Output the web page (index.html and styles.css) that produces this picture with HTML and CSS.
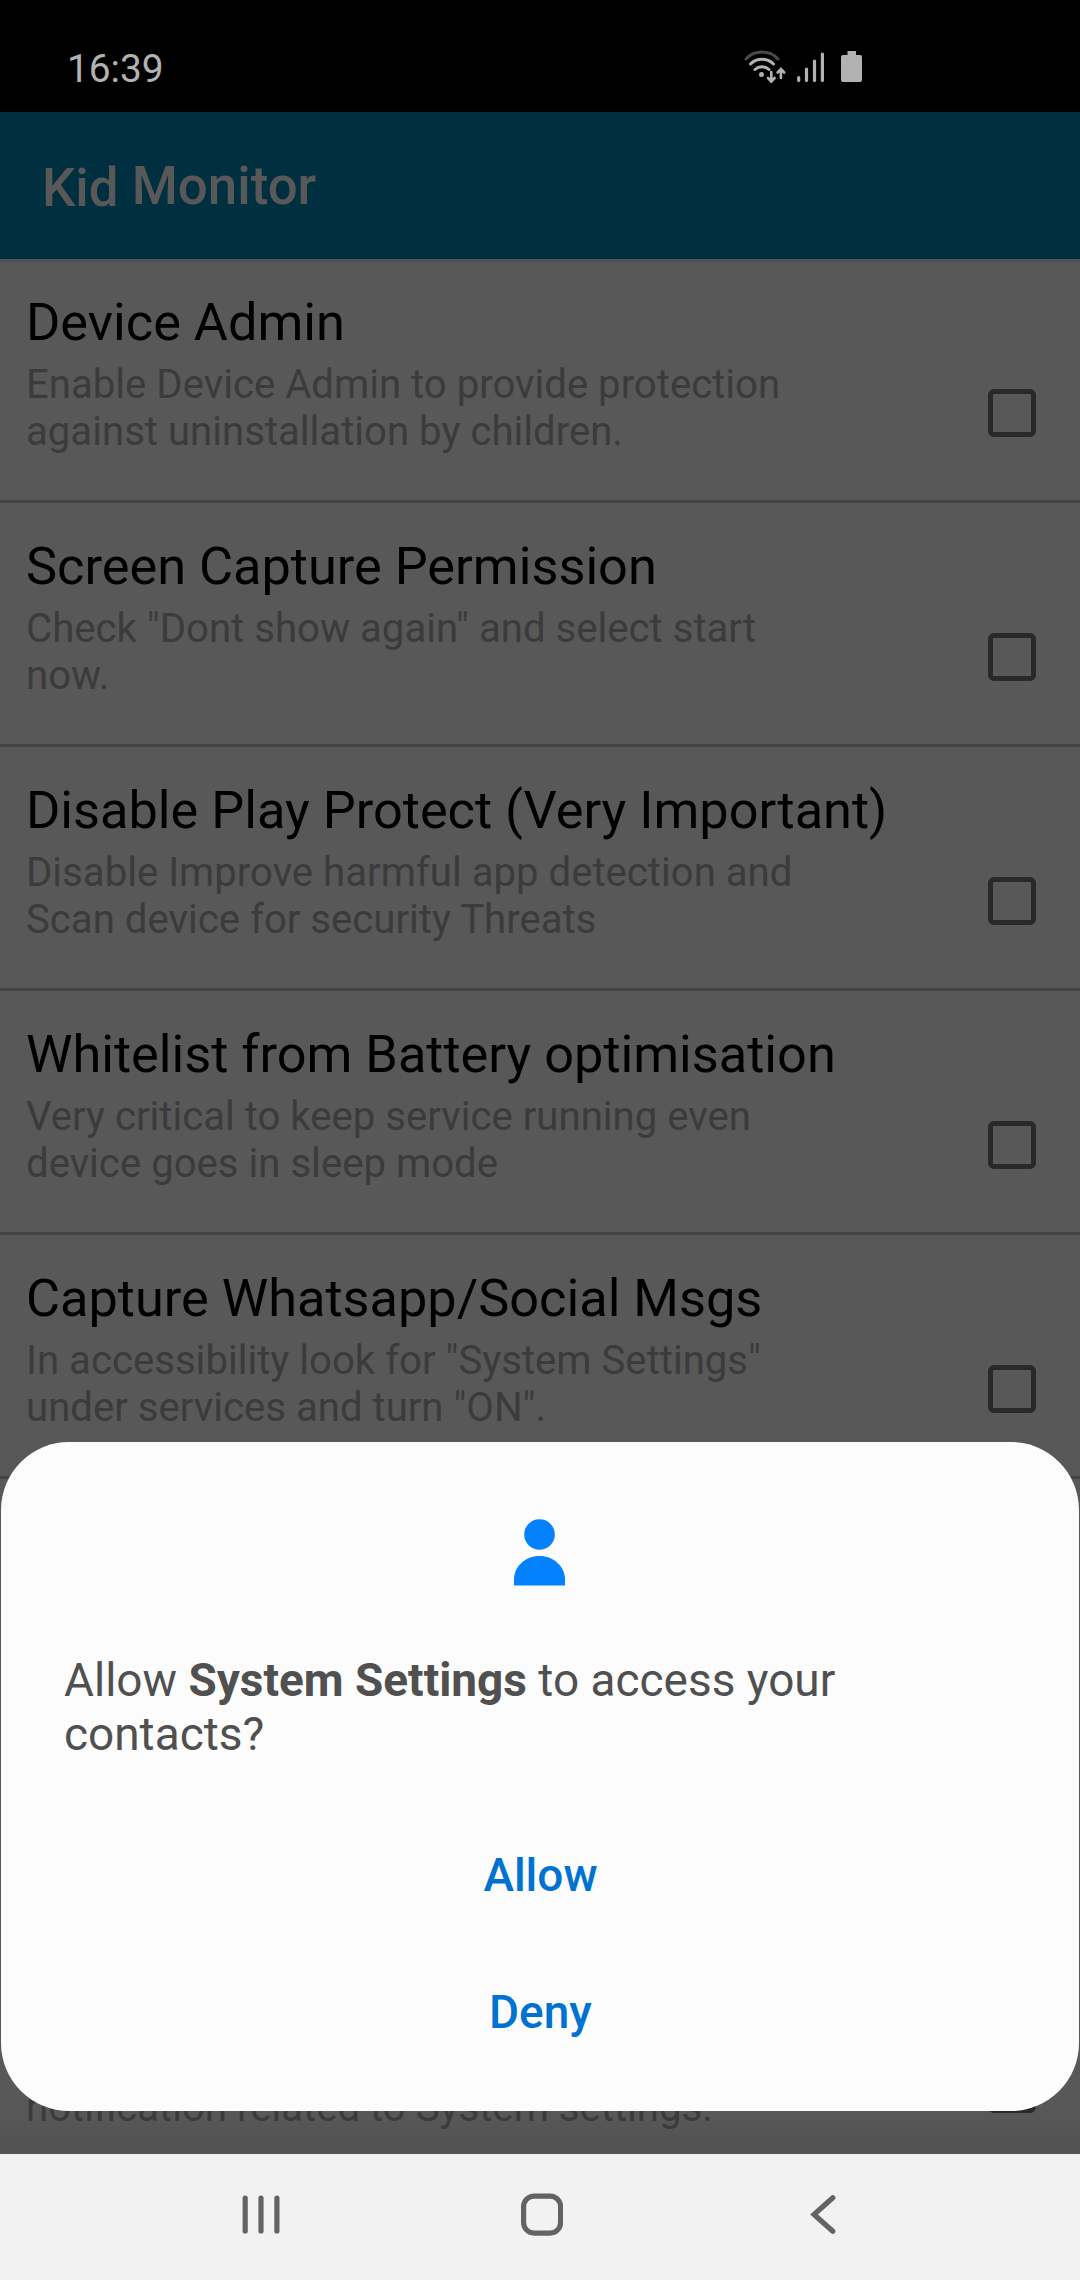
FILE: index.html
```html
<!DOCTYPE html>
<html lang="en">
<head>
<meta charset="utf-8">
<title>Kid Monitor</title>
<link rel="stylesheet" href="styles.css">
</head>
<body>
<div class="screen">
  <header class="status">
    <span class="clock">16:39</span>
    <svg class="status-icons" width="122" height="36" viewBox="0 0 122 36" fill="none" stroke="#b2b2b2" stroke-linecap="round">
      <path d="M3 10A22 22 0 0 1 35 10" stroke="#4a4a4a" stroke-width="3"/>
      <path d="M7.500 15A16.500 16.500 0 0 1 30.500 15M12 20.500A10.500 10.500 0 0 1 26 20.500" stroke-width="3"/>
      <circle cx="18.500" cy="25.500" r="2.500" fill="#b2b2b2" stroke="none"/>
      <path d="M28.300 23V32M25 29L28.300 32.500L31.600 29M37.900 29V20M34.600 23.500L37.900 20L41.200 23.500" stroke-width="2.600"/>
      <path d="M55.700 28.500V31.500M63.500 20V31.500M71.500 12V31.500M79.400 5V31.500" stroke-width="3.200"/>
      <path d="M104.500 2H113V6H117Q119 6 119 8V31Q119 33 117 33H100Q98 33 98 31V8Q98 6 100 6H104.500Z" fill="#b2b2b2" stroke="none"/>
    </svg>
  </header>
  <div class="appbar"><h1><span class="kid">Kid</span> Monitor</h1></div>
  <main class="list">
    <section class="row"><div class="copy"><h2>Device Admin</h2><p>Enable Device Admin to provide protection<br>against uninstallation by children.</p></div><span class="check"></span></section>
    <section class="row"><div class="copy"><h2>Screen Capture Permission</h2><p>Check "Dont show again" and select start<br>now.</p></div><span class="check"></span></section>
    <section class="row"><div class="copy"><h2>Disable Play Protect (Very Important)</h2><p>Disable Improve harmful app detection and<br>Scan device for security Threats</p></div><span class="check"></span></section>
    <section class="row"><div class="copy"><h2>Whitelist from Battery optimisation</h2><p>Very critical to keep service running even<br>device goes in sleep mode</p></div><span class="check"></span></section>
    <section class="row"><div class="copy"><h2>Capture Whatsapp/Social Msgs</h2><p>In accessibility look for "System Settings"<br>under services and turn "ON".</p></div><span class="check"></span></section>
    <div class="covered"></div>
    <section class="row"><div class="copy last"><p>notification related to System settings.</p></div><span class="check"></span></section>
  </main>
  <nav class="nav">
    <svg width="42" height="44" viewBox="0 0 42 44" stroke="#636363" stroke-width="5.200" stroke-linecap="round"><path d="M5.200 5V38M21 5V38M36.900 5V38"/></svg>
    <svg width="42" height="44" viewBox="0 0 42 44" fill="none" stroke="#636363" stroke-width="5.200"><rect x="2.600" y="3.100" width="37" height="37" rx="10.500"/></svg>
    <svg width="42" height="44" viewBox="0 0 42 44" fill="none" stroke="#636363" stroke-width="5.200" stroke-linecap="round"><path d="M30.800 4.700L12 21.500L30.800 38.300"/></svg>
  </nav>
  <div class="dialog" role="dialog">
    <svg class="person" width="52" height="68" viewBox="0 0 52 68" fill="#0381fe"><circle cx="25.500" cy="16.500" r="15.300"/><path d="M0 67.500V61.500C0 48.500 11.500 38 25.500 38S51 48.500 51 61.500V67.500Z"/></svg>
    <p class="question">Allow <b>System Settings</b> to access your<br>contacts?</p>
    <button class="action">Allow</button>
    <button class="action">Deny</button>
  </div>
</div>
</body>
</html>
```
FILE: styles.css
```css
* { box-sizing: border-box; }
body { margin: 0; font-family: Roboto, sans-serif; }
h1, h2, p { margin: 0; font-weight: 400; }

.screen {
  position: relative;
  display: flex;
  flex-direction: column;
  width: 1080px;
  height: 2280px;
  overflow: hidden;
  background: #585858;
}

.status {
  display: flex;
  justify-content: space-between;
  flex: none;
  height: 112px;
  padding: 46px 215px 0 67px;
  background: #000;
}
.clock { font-size: 38.800px; line-height: 45px; color: #b2b2b2; }
.status-icons { margin-top: 3px; }

.appbar {
  flex: none;
  height: 147px;
  padding: 43px 42px 0;
  background: #00303f;
  color: #585858;
}
.appbar h1 { font-size: 52.800px; line-height: 62px; font-weight: 500; }
.kid { position: relative; top: 2px; }

.list {
  flex: 1;
  min-height: 0;
  overflow: hidden;
  background: linear-gradient(#4a5357 0 3px, #565656 3px, #585858 16px, #585858 1850px, #535353 1885px);
}
.row {
  display: flex;
  justify-content: space-between;
  height: 244px;
  padding: 32px 44px 0 26px;
  border-bottom: 3px solid #444;
}
.copy h2 { font-size: 52.300px; line-height: 62px; color: #000; }
.copy p { margin-top: 8px; font-size: 40.150px; line-height: 47px; color: #3b3b3b; white-space: nowrap; }
.copy.last { padding-top: 109px; }
.check {
  width: 48px;
  height: 48px;
  margin-top: 98px;
  border: 5px solid #292929;
  border-radius: 6px;
}
.covered { height: 456px; }

.nav {
  display: flex;
  justify-content: center;
  gap: 239px;
  flex: none;
  height: 126px;
  padding: 39px 0 0 4px;
  background: #f2f2f2;
}

.dialog {
  position: absolute;
  left: 1px;
  top: 1442px;
  display: flex;
  flex-direction: column;
  align-items: center;
  width: 1078px;
  height: 669px;
  padding-top: 76px;
  border-radius: 68px;
  background: #fcfcfc;
}
.question {
  align-self: stretch;
  margin-top: 67px;
  padding: 0 63px;
  font-size: 45.950px;
  line-height: 54px;
  color: #505050;
}
.action {
  width: 400px;
  height: 137px;
  padding: 0 0 0 1px;
  border: 0;
  background: none;
  color: #0072d2;
  font: 500 46px/54px Roboto, sans-serif;
}
.question + .action { margin-top: 45px; }
```
